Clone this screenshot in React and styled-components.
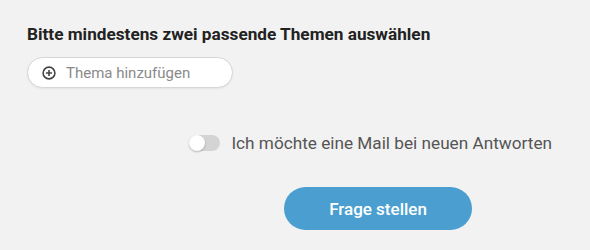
import React, { useState } from 'react';
import styled, { createGlobalStyle } from 'styled-components';

const GlobalStyle = createGlobalStyle`
  html, body {
    margin: 0;
    padding: 0;
    background: #f2f2f2;
    font-family: Roboto, "Liberation Sans", Arial, sans-serif;
  }
`;

const Page = styled.div`
  width: 590px;
  height: 250px;
  box-sizing: border-box;
  padding: 24px 0 0 27px;
  display: flex;
  flex-direction: column;
`;

const Title = styled.h3`
  margin: 0;
  font-size: 17.2px;
  line-height: 20px;
  font-weight: 700;
  color: #222;
`;

const TopicInput = styled.label`
  margin-top: 13px;
  width: 206px;
  height: 31px;
  box-sizing: border-box;
  display: flex;
  align-items: center;
  gap: 10px;
  padding-left: 14px;
  background: #fff;
  border: 1px solid #d6d6d6;
  border-radius: 16px;
  box-shadow: 0 1px 2px rgba(0, 0, 0, 0.06);
  cursor: text;
`;

const Placeholder = styled.span`
  font-size: 15px;
  color: #8a8a8a;
`;

const Options = styled.div`
  margin-top: 45px;
  display: flex;
  flex-direction: column;
  align-items: flex-end;
`;

const ToggleRow = styled.div`
  display: flex;
  align-items: center;
  gap: 11px;
  margin-right: 38px;
`;

const Track = styled.button`
  position: relative;
  width: 31px;
  height: 16px;
  padding: 0;
  border: none;
  border-radius: 8px;
  background: ${p => (p.$on ? '#9ccbe6' : '#d4d4d4')};
  cursor: pointer;
`;

const Thumb = styled.span`
  position: absolute;
  top: 0;
  left: ${p => (p.$on ? '15px' : '0')};
  width: 16px;
  height: 16px;
  border-radius: 50%;
  background: ${p => (p.$on ? '#4a9fd0' : '#fff')};
  box-shadow: 0 1px 2px rgba(0, 0, 0, 0.25);
`;

const ToggleLabel = styled.span`
  font-size: 17.2px;
  color: #555;
`;

const SubmitButton = styled.button`
  margin-top: 34px;
  margin-right: 118px;
  width: 188px;
  height: 43px;
  border: none;
  border-radius: 22px;
  background: #4a9fd0;
  color: #fff;
  font-family: inherit;
  font-size: 17px;
  font-weight: 500;
  cursor: pointer;
`;

const PlusIcon = () => (
  <svg width="14" height="14" viewBox="0 0 14 14" fill="none" stroke="#444" strokeWidth="1.6">
    <circle cx="7" cy="7" r="5.9" />
    <path d="M7 3.9v6.2M3.9 7h6.2" />
  </svg>
);

export default function App() {
  const [mail, setMail] = useState(false);

  return (
    <Page>
      <GlobalStyle />
      <Title>Bitte mindestens zwei passende Themen auswählen</Title>
      <TopicInput>
        <PlusIcon />
        <Placeholder>Thema hinzufügen</Placeholder>
      </TopicInput>
      <Options>
        <ToggleRow>
          <Track $on={mail} onClick={() => setMail(!mail)}>
            <Thumb $on={mail} />
          </Track>
          <ToggleLabel>Ich möchte eine Mail bei neuen Antworten</ToggleLabel>
        </ToggleRow>
        <SubmitButton>Frage stellen</SubmitButton>
      </Options>
    </Page>
  );
}
